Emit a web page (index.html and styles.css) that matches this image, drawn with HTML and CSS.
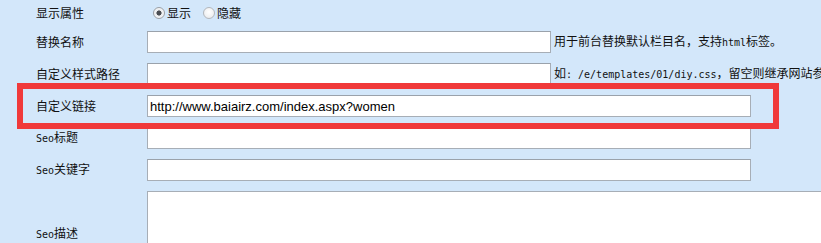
FILE: index.html
```html
<!DOCTYPE html>
<html lang="zh-CN">
<head>
<meta charset="utf-8">
<title>栏目设置</title>
<link rel="stylesheet" href="styles.css">
</head>
<body>
<div class="page">
  <div class="form">
    <div class="row row-first">
      <div class="label">显示属性</div>
      <div class="field">
        <label class="radio"><input type="radio" name="show" checked><span>显示</span></label>
        <label class="radio"><input type="radio" name="show"><span>隐藏</span></label>
      </div>
    </div>
    <div class="row">
      <div class="label">替换名称</div>
      <div class="field">
        <input class="text short" type="text">
        <span class="hint">用于前台替换默认栏目名，支持<span class="mono">html</span>标签。</span>
      </div>
    </div>
    <div class="row">
      <div class="label">自定义样式路径</div>
      <div class="field">
        <input class="text short" type="text">
        <span class="hint">如<span class="mono">: /e/templates/01/diy.css</span>，留空则继承网站参数设置</span>
      </div>
    </div>
    <div class="row">
      <div class="label">自定义链接</div>
      <div class="field">
        <input class="text long" type="text" value="http://www.baiairz.com/index.aspx?women">
      </div>
    </div>
    <div class="row">
      <div class="label"><span class="mono">Seo</span>标题</div>
      <div class="field">
        <input class="text long" type="text">
      </div>
    </div>
    <div class="row">
      <div class="label"><span class="mono">Seo</span>关键字</div>
      <div class="field">
        <input class="text long" type="text">
      </div>
    </div>
    <div class="row row-area">
      <div class="label"><span class="mono">Seo</span>描述</div>
      <div class="field">
        <textarea class="area"></textarea>
      </div>
    </div>
  </div>
  <div class="highlight"></div>
</div>
</body>
</html>
```

FILE: styles.css
```css
html, body {
  margin: 0;
  padding: 0;
  background: #d3e7fa;
  overflow: hidden;
}

body {
  font-family: "Noto Sans CJK SC", "Liberation Sans", sans-serif;
  font-size: 12px;
  color: #111;
}

.page {
  position: relative;
  width: 821px;
  height: 243px;
  overflow: hidden;
}

.form {
  display: flex;
  flex-direction: column;
}

.row {
  display: flex;
  align-items: center;
  height: 32px;
}

.row-first {
  height: 26px;
}

.row-area {
  height: 96px;
}

.label {
  flex: 0 0 147px;
  box-sizing: border-box;
  padding-left: 36px;
  white-space: nowrap;
  line-height: 16px;
}

.mono {
  font-family: "DejaVu Sans Mono", "Liberation Mono", monospace;
  font-size: 10px;
}

.field {
  display: flex;
  align-items: center;
  white-space: nowrap;
}

.radio {
  display: flex;
  align-items: center;
  margin-left: 6px;
  margin-right: 6px;
}

.radio span {
  margin-left: 2px;
  line-height: 16px;
}

.radio input {
  appearance: none;
  -webkit-appearance: none;
  width: 12px;
  height: 12px;
  margin: 0;
  border: 1px solid #b3b7bc;
  border-radius: 50%;
  background: radial-gradient(circle at 50% 40%, #ffffff 0%, #e6e8ea 100%);
  box-sizing: border-box;
}

.radio input:checked {
  border-color: #9a9fa5;
  background: radial-gradient(circle, #4a4d52 0, #4a4d52 2.3px, #e9ebed 2.8px, #ffffff 100%);
}

.text {
  box-sizing: border-box;
  height: 22px;
  margin: 0;
  padding: 0 2px;
  border: 1px solid #a7aeb6;
  border-top-color: #9aa2ab;
  background: #fff;
  font-family: "Liberation Sans", Arial, sans-serif;
  font-size: 13px;
  color: #000;
  outline: none;
}

.short {
  width: 404px;
}

.long {
  width: 604px;
}

.hint {
  margin-left: 3px;
  line-height: 16px;
}

.area {
  box-sizing: border-box;
  width: 740px;
  height: 86px;
  margin: 0;
  border: 1px solid #a7aeb6;
  background: #fff;
  resize: none;
  display: block;
}

.highlight {
  position: absolute;
  left: 17px;
  top: 83px;
  width: 762px;
  height: 46px;
  box-sizing: border-box;
  border: 6.5px solid #f0393a;
  pointer-events: none;
}
```
